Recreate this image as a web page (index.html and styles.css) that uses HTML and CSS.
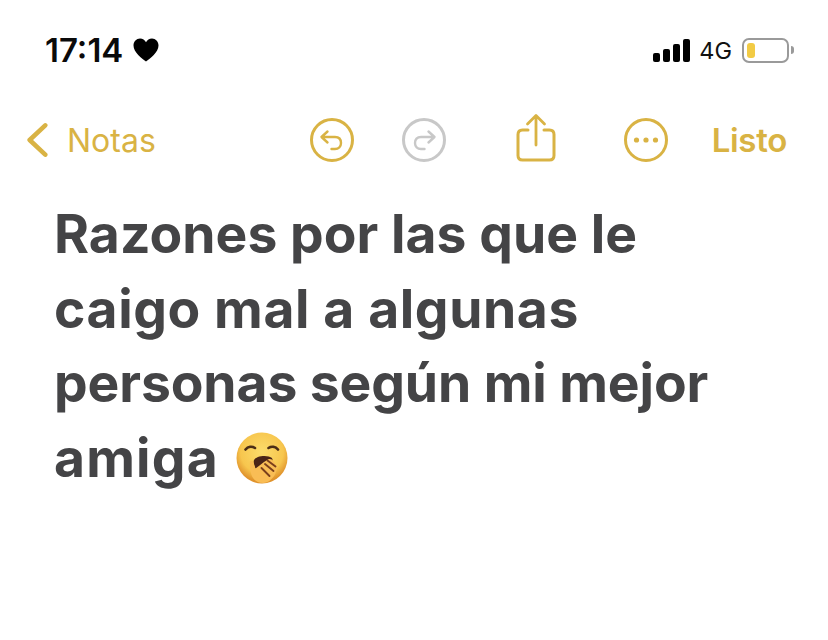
FILE: index.html
```html
<!DOCTYPE html>
<html lang="es">
<head>
<meta charset="utf-8">
<title>Notas</title>
<link rel="stylesheet" href="styles.css">
</head>
<body>
<div class="phone">
  <header class="status">
    <div class="status-left">
      <span class="time">17:14</span>
      <svg class="heart" viewBox="0 0 26 24"><path d="M13 23.500C9 20.500 0.500 14.500 0.500 7.500C0.500 3.500 3.500 0.500 7 0.500C9.700 0.500 11.800 2 13 4.300C14.200 2 16.300 0.500 19 0.500C22.500 0.500 25.500 3.500 25.500 7.500C25.500 14.500 17 20.500 13 23.500Z"/></svg>
    </div>
    <div class="status-right">
      <div class="signal"><i class="b1"></i><i class="b2"></i><i class="b3"></i><i class="b4"></i></div>
      <span class="net">4G</span>
      <div class="battery"><div class="battery-level"></div></div>
      <div class="battery-tip"></div>
    </div>
  </header>

  <nav class="toolbar">
    <div class="back">
      <svg class="chevron" viewBox="0 0 24 38"><path d="M21 3L4 19L21 35" fill="none" stroke="#d9b344" stroke-width="5" stroke-linecap="round" stroke-linejoin="round"/></svg>
      <span class="back-label">Notas</span>
    </div>
    <div class="actions">
      <svg class="icon undo" viewBox="0 0 44 44" fill="none" stroke="#d9b344" stroke-width="3" stroke-linecap="round" stroke-linejoin="round">
        <circle cx="22" cy="22" r="20.500"/>
        <path d="M17.500 13.500L11.500 19L17.500 24.500M11.800 19H25C29 19 31 21.500 31 25C31 28.500 28.500 31 25 31H21.500" stroke-width="2.400"/>
      </svg>
      <svg class="icon redo" viewBox="0 0 44 44" fill="none" stroke="#c8c8c8" stroke-width="3" stroke-linecap="round" stroke-linejoin="round">
        <circle cx="22" cy="22" r="20.500"/>
        <path d="M26.500 13.500L32.500 19L26.500 24.500M32.200 19H19C15 19 13 21.500 13 25C13 28.500 15.500 31 19 31H22.500" stroke-width="2.400"/>
      </svg>
      <svg class="icon share" viewBox="0 0 40 50" fill="none" stroke="#d9b344" stroke-width="3" stroke-linecap="round" stroke-linejoin="round">
        <path d="M12 17H6.500C3.500 17 2 18.500 2 21.500V42.500C2 45.500 3.500 47 6.500 47H33.500C36.500 47 38 45.500 38 42.500V21.500C38 18.500 36.500 17 33.500 17H28"/>
        <path d="M20 32V3M11.500 11L20 2.500L28.500 11" stroke-width="2.800"/>
      </svg>
      <svg class="icon more" viewBox="0 0 44 44" fill="none" stroke="#d9b344" stroke-width="3">
        <circle cx="22" cy="22" r="20.500"/>
        <circle cx="12.500" cy="22" r="2.600" fill="#d9b344" stroke="none"/>
        <circle cx="22" cy="22" r="2.600" fill="#d9b344" stroke="none"/>
        <circle cx="31.500" cy="22" r="2.600" fill="#d9b344" stroke="none"/>
      </svg>
    </div>
    <span class="done">Listo</span>
  </nav>

  <main class="note">
    <h1 class="note-title">
      <span class="line">Razones por las que le</span>
      <span class="line line-wide">caigo mal a algunas</span>
      <span class="line line-tight">personas según mi mejor</span>
      <span class="line line-last">amiga <svg class="emoji" viewBox="0 0 54 54" role="img" aria-label="bostezo">
        <defs>
          <radialGradient id="skin" cx="50%" cy="38%" r="58%">
            <stop offset="0" stop-color="#fcdc6c"/>
            <stop offset="0.72" stop-color="#f7c64e"/>
            <stop offset="1" stop-color="#e0932c"/>
          </radialGradient>
        </defs>
        <circle cx="27" cy="27" r="25.500" fill="url(#skin)"/>
        <path d="M10.500 18.500C13 15.500 17 15 20 17M33.500 17C36.500 15 40.500 15.500 43 18.500" fill="none" stroke="#4b2d16" stroke-width="2.600" stroke-linecap="round"/>
        <path d="M19 29C21 24.500 33 23.500 37 27C39 31 37 37 33 40H22C19.500 37 18 32 19 29Z" fill="#4a2417"/>
        <path d="M15 30.500C15.800 29.500 17.500 29.500 18.300 30.800L20.500 37.500L24.500 34.500L29 31L33 28.500C35 27.500 37.500 28.500 38.500 30L41.500 34.500C42.500 36.500 42 39 41 41C40 44 38.500 46 36.500 48C33.500 51 30.500 52 28 52C22 52 18 48.500 16.500 44C15 39 14.500 33 15 30.500Z" fill="#f9bd55"/>
        <path d="M32.500 29.500L40.500 35.500M30 33L38.500 40M26.500 37L34.500 45" fill="none" stroke="#7a3f1b" stroke-width="1.900" stroke-linecap="round"/>
      </svg></span>
    </h1>
  </main>
</div>
</body>
</html>
```
FILE: styles.css
```css
html, body {
  margin: 0;
  padding: 0;
  background: #fff;
}

.phone {
  width: 828px;
  height: 640px;
  overflow: hidden;
  font-family: Inter, "Liberation Sans", sans-serif;
}

/* Status bar */
.status {
  display: flex;
  justify-content: space-between;
  align-items: center;
  height: 30px;
  padding: 35px 34px 0 45px;
}

.status-left {
  display: flex;
  align-items: center;
  gap: 10px;
}

.time {
  font-size: 33px;
  font-weight: 600;
  line-height: 30px;
  color: #0a0a0a;
}

.heart {
  width: 26px;
  height: 24px;
  fill: #000;
}

.status-right {
  display: flex;
  align-items: center;
}

.signal {
  display: flex;
  align-items: flex-end;
  gap: 2.500px;
  height: 23px;
  margin-right: 9px;
}

.signal i {
  display: block;
  width: 7.500px;
  background: #000;
  border-radius: 2px;
}

.signal .b1 { height: 9px; }
.signal .b2 { height: 13px; }
.signal .b3 { height: 18px; }
.signal .b4 { height: 23px; }

.net {
  font-size: 23.500px;
  font-weight: 400;
  color: #111;
  margin-right: 10px;
}

.battery {
  box-sizing: border-box;
  width: 47px;
  height: 25px;
  padding: 3px;
  border: 2px solid #9a9a9a;
  border-radius: 7px;
}

.battery-level {
  width: 8px;
  height: 100%;
  background: #f2cb45;
  border-radius: 3px;
}

.battery-tip {
  width: 3px;
  height: 8px;
  margin-left: 2px;
  background: #9a9a9a;
  border-radius: 0 4px 4px 0;
}

/* Editing toolbar */
.toolbar {
  display: flex;
  align-items: center;
  height: 60px;
  margin-top: 45px;
  padding: 0 41px 0 26px;
  color: #d9b344;
}

.back {
  display: flex;
  align-items: center;
  gap: 19px;
  width: 284px;
}

.chevron {
  width: 22px;
  height: 38px;
}

.back-label {
  font-size: 32px;
}

.actions {
  display: flex;
  align-items: center;
}

.icon {
  display: block;
}

.undo, .redo, .more {
  width: 44px;
  height: 44px;
}

.redo { margin-left: 48px; }
.share { width: 40px; height: 50px; margin: -4px 0 0 70px; }
.more { margin-left: 68px; }

.done {
  margin-left: auto;
  font-size: 33px;
  font-weight: 600;
  letter-spacing: -0.3px;
}

/* Note body */
.note {
  padding: 27px 0 0 54px;
}

.note-title {
  margin: 0;
  font-size: 53.400px;
  font-weight: 700;
  letter-spacing: 0.05px;
  color: #444446;
  white-space: nowrap;
}

.line {
  display: block;
  height: 74.500px;
  line-height: 74.500px;
}

.line-wide { letter-spacing: 0.6px; }
.line-tight { letter-spacing: -0.1px; }
.line-last { letter-spacing: 1.2px; }

.emoji {
  width: 54px;
  height: 54px;
  margin-left: 2px;
  vertical-align: -8px;
}
```
